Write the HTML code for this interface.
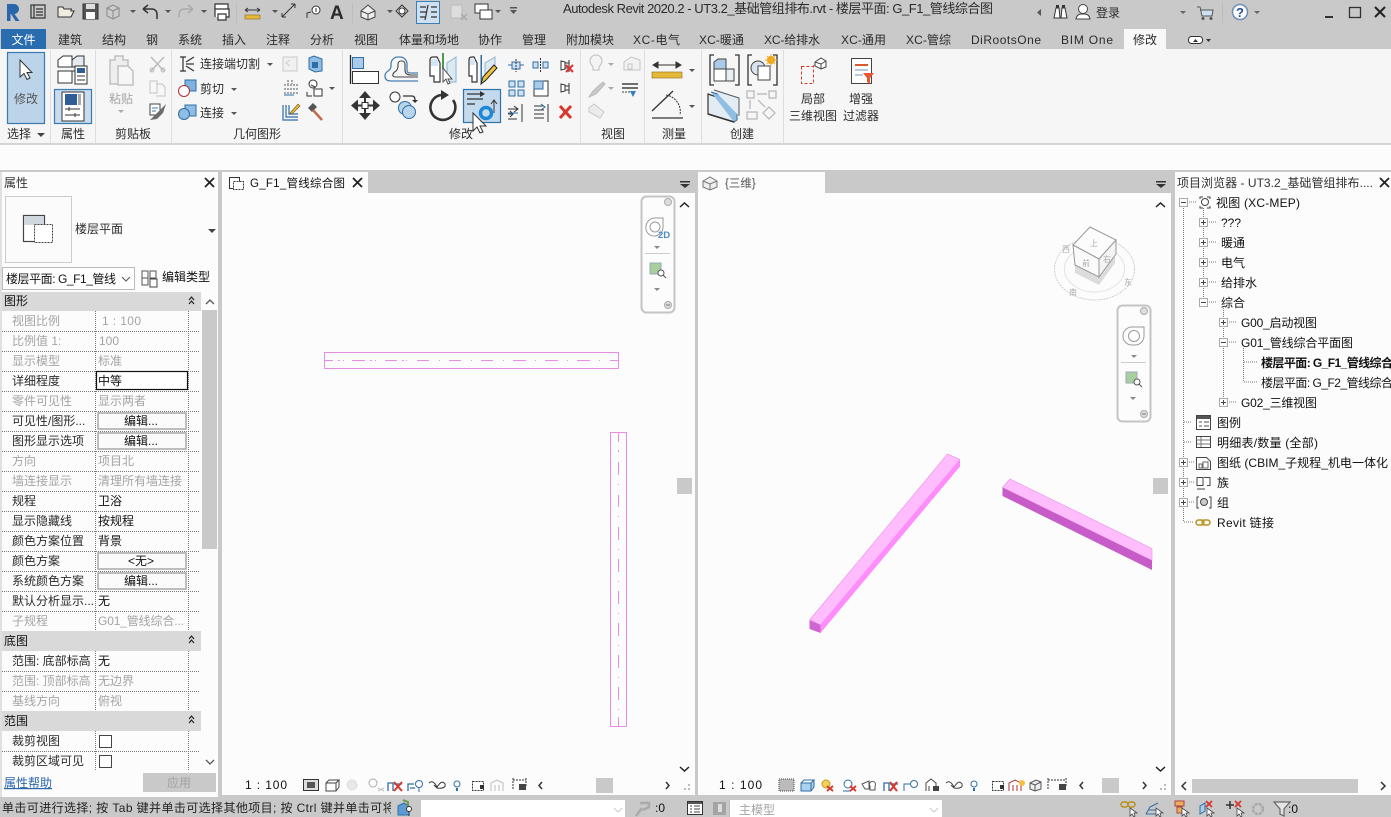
<!DOCTYPE html>
<html><head><meta charset="utf-8"><title>Revit</title>
<style>
html,body{margin:0;padding:0;background:#fcfcfc;width:1391px;height:817px;overflow:hidden}
svg{display:block;position:absolute;left:0;top:0}
text{font-family:"Liberation Sans","Noto Sans CJK SC",sans-serif;font-size:12px;fill:#2b2b2b}
.m{text-anchor:middle}
.g{fill:#8e8e8e}
.k{fill:#111}
.lg{fill:#a4a4a4}
.d{fill:none;stroke:#333;stroke-width:1.2}
.b{fill:#cfe0f0;stroke:#2f6ea5;stroke-width:1.2}
.n{fill:none;stroke:#4a7fb0;stroke-width:1.2}
.w{fill:#fff;stroke:#333;stroke-width:1.2}
.gs{fill:none;stroke:#b5b5b5;stroke-width:1.2}
.do{stroke:#777;stroke-width:1;stroke-dasharray:1 1;fill:none}
.p{fill:none;stroke:#e88ce8;stroke-width:1}
.vc{font-size:8px;fill:#aaa}
</style></head><body>
<svg width="1391" height="817" viewBox="0 0 1391 817" xmlns="http://www.w3.org/2000/svg">
<!-- backgrounds -->
<rect width="1391" height="817" fill="#fcfcfc"/>
<rect width="1391" height="49" fill="#c9c9c9"/>
<rect y="49" width="1391" height="95" fill="#f6f6f6"/>
<rect y="143" width="1391" height="2" fill="#d4d4d4"/>
<rect y="170" width="1391" height="2" fill="#c9c9c9"/>
<rect y="797" width="1391" height="20" fill="#c9c9c9"/>
<!-- QAT -->
<path d="M7 21V4h6.500a4.500 4.500 0 0 1 1 10l5 7h-4l-4.500-7H10.500v7z" fill="#2a66ac"/>
<g>
<rect x="31" y="5" width="14" height="13" class="d"/><path d="M34 5v13M36 9h7M36 12h7M36 15h7" class="d"/>
<path d="M58 17V7h5l1 2h8l-1 0v2h3l-3 6z" fill="#f0ece0" stroke="#333"/>
<rect x="83" y="4" width="15" height="15" fill="#555" stroke="#333"/><rect x="86" y="4" width="9" height="5" fill="#ddd"/><rect x="86" y="12" width="9" height="7" fill="#fff"/>
<path d="M107 8l6-3 6 3v8l-6 3-6-3z" fill="#ccc" stroke="#888"/><path d="M107 8l6 3 6-3M113 11v8" stroke="#888" fill="none"/>
<path d="M143 9h9a5 5 0 0 1 5 5v5M143 9l5-4M143 9l5 4" fill="none" stroke="#333" stroke-width="1.500"/>
<path d="M193 9h-9a5 5 0 0 0-5 5v3M193 9l-5-4M193 9l-5 4" fill="none" stroke="#aaa" stroke-width="1.500"/>
<path d="M215 9V4h13v5M215 17v-8h14v8h-3M218 14h8v6h-8z" fill="#fff" stroke="#333" stroke-width="1.200"/>
<rect x="245" y="15" width="15" height="4" fill="#e7b93a" stroke="#8a6a15" stroke-width=".6"/><path d="M245 10h15M245 10l3-2M245 10l3 2M260 10l-3-2M260 10l-3 2" stroke="#333" fill="none"/>
<path d="M282 17l13-13M282 17v-4M282 17h4M295 4v4M295 4h-4" stroke="#333" fill="none"/>
<circle cx="316" cy="10" r="4" fill="#fff" stroke="#333"/><path d="M316 8v4" stroke="#333"/><path d="M307 18v-5l4-1" fill="none" stroke="#333"/>
<text x="330" y="19" style="font-size:19px;font-weight:bold" fill="#333">A</text>
<path d="M361 11l7-6 7 6v6l-7 3-7-3z" fill="#eee" stroke="#444"/><path d="M361 11l7 3 7-3M368 14v6" stroke="#444" fill="none"/>
<path d="M396 11l6-6 6 6-6 6z" fill="#ddd" stroke="#333"/><circle cx="402" cy="11" r="3" fill="#fff" stroke="#333"/>
<rect x="416.500" y="1.500" width="23" height="22" fill="#cfe0f0" stroke="#3c7fb5"/><path d="M420 7h6M420 12h6M420 17h6M428 5l-3 15M431 7h6M431 12h6M431 17h6" stroke="#333" stroke-width="1.200" fill="none"/>
<rect x="451" y="5" width="11" height="13" fill="#ddd" stroke="#bbb"/><path d="M461 14l6 6M467 14l-6 6" stroke="#aaa" stroke-width="1.500"/>
<rect x="475" y="4" width="13" height="9" fill="#fff" stroke="#333"/><rect x="480" y="10" width="12" height="9" fill="#fff" stroke="#333"/>
</g>
<g fill="#555"><path d="M130 10h6l-3 3zM165 10h6l-3 3zM201 10h6l-3 3zM272 10h6l-3 3zM387 10h6l-3 3zM495 10h6l-3 3z"/><path d="M510 7h7v1.500h-7zM510 10h7l-3.500 4z"/></g>
<rect x="236" y="3" width="1" height="20" fill="#bdbdbd"/><rect x="352" y="3" width="1" height="20" fill="#bdbdbd"/>
<text x="563" y="13" style="font-size:13px" textLength="430" fill="#333">Autodesk Revit 2020.2 - UT3.2_基础管组排布.rvt - 楼层平面: G_F1_管线综合图</text>
<!-- top right -->
<path d="M1041 9v7l-4-3.500z" fill="#555"/>
<path d="M1054 18l2-10h3l1 10zM1061 18l1-10h3l2 10z" fill="#fff" stroke="#333"/><rect x="1056" y="5" width="3" height="3" fill="#333"/><rect x="1062" y="5" width="3" height="3" fill="#333"/>
<circle cx="1083" cy="9" r="4.500" fill="#fff" stroke="#444"/><path d="M1076 19c1-5 4-5 7-5s6 0 7 5z" fill="#fff" stroke="#444"/>
<text x="1096" y="17">登录</text>
<path d="M1180 11h6l-3 3z" fill="#666"/>
<path d="M1197 7h3l2 9h10l1-6h-13" fill="#cfe0f0" stroke="#555"/><circle cx="1203" cy="18.500" r="1.500" fill="#555"/><circle cx="1211" cy="18.500" r="1.500" fill="#555"/>
<rect x="1222" y="3" width="1" height="20" fill="#bbb"/>
<circle cx="1240" cy="12" r="7.500" fill="#fff" stroke="#6d8db5" stroke-width="1.500"/><text x="1240" y="17" class="m" style="font-size:13px;font-weight:bold;fill:#234f9e">?</text>
<path d="M1254 11h6l-3 3z" fill="#666"/>
<rect x="1325" y="16" width="8" height="2" fill="#333"/>
<rect x="1349.500" y="7.500" width="11" height="10" fill="none" stroke="#333" stroke-width="1.300"/>
<path d="M1375 7l10 10M1385 7l-10 10" stroke="#222" stroke-width="2"/>
<!-- tabs -->
<rect x="1" y="29" width="45" height="20" fill="#2a6cb0"/>
<text x="23.500" y="44" class="m" style="fill:#fff">文件</text>
<rect x="1124" y="29" width="42" height="20" fill="#f8f8f8"/>
<g style="fill:#333">
<text x="70" y="44" class="m">建筑</text><text x="114" y="44" class="m">结构</text><text x="152" y="44" class="m">钢</text><text x="190" y="44" class="m">系统</text><text x="234" y="44" class="m">插入</text><text x="278" y="44" class="m">注释</text><text x="322" y="44" class="m">分析</text><text x="366" y="44" class="m">视图</text><text x="429" y="44" class="m">体量和场地</text><text x="490" y="44" class="m">协作</text><text x="534" y="44" class="m">管理</text><text x="590" y="44" class="m">附加模块</text><text x="633" y="44" textLength="47">XC-电气</text><text x="699" y="44" textLength="45">XC-暖通</text><text x="764" y="44" textLength="56">XC-给排水</text><text x="841" y="44" textLength="45">XC-通用</text><text x="906" y="44" textLength="45">XC-管综</text><text x="971" y="44" textLength="70">DiRootsOne</text><text x="1061" y="44" textLength="52">BIM One</text><text x="1145" y="44" class="m">修改</text>
</g>
<rect x="1188.500" y="36.500" width="14" height="7" rx="3" fill="#fff" stroke="#333"/><path d="M1193 42l2.500-3 2.500 3z" fill="#333"/><path d="M1206 39h5l-2.500 3z" fill="#333"/>
<!-- ribbon separators -->
<g fill="#dedede"><rect x="50" y="50" width="1" height="93"/><rect x="95" y="50" width="1" height="93"/><rect x="171" y="50" width="1" height="93"/><rect x="342" y="50" width="1" height="93"/><rect x="580" y="50" width="1" height="93"/><rect x="644" y="50" width="1" height="93"/><rect x="701" y="50" width="1" height="93"/><rect x="783" y="50" width="1" height="93"/></g>
<!-- panel labels -->
<g>
<text x="7" y="138">选择</text><path d="M37 133h8l-4 4z" fill="#444"/>
<text x="73" y="138" class="m">属性</text><text x="133" y="138" class="m">剪贴板</text><text x="257" y="138" class="m">几何图形</text><text x="461" y="138" class="m">修改</text><text x="613" y="138" class="m">视图</text><text x="674" y="138" class="m">测量</text><text x="742" y="138" class="m">创建</text>
</g>
<!-- select -->
<rect x="7.500" y="52.500" width="37" height="71" fill="#bcd4ea" stroke="#3a7ab0" stroke-width="1.200"/>
<path d="M20 60v17l4-3.500 3 6 3-1.500-3-5.500h5z" fill="#fff" stroke="#333"/>
<text x="26" y="103" class="m" style="fill:#555">修改</text>
<!-- properties icons -->
<path d="M58 60l5-4h9v11h-14zM58 71h14v12h-14z" fill="#fff" stroke="#333"/><path d="M72 60l5-4h7v11h-12zM72 71h6" fill="#e4eaef" stroke="#333"/>
<rect x="75" y="66" width="12" height="18" fill="#fff" stroke="#333"/><rect x="77" y="68" width="8" height="5" fill="#2f5e96"/><path d="M77 76h8M77 80h8" stroke="#333"/>
<rect x="54.500" y="89.500" width="37" height="34" fill="#c9dcee" stroke="#3a7ab0" stroke-width="1.200"/>
<rect x="62" y="92" width="22" height="29" fill="#fff" stroke="#333"/><rect x="65" y="94" width="12" height="11" fill="#2f5e96"/><rect x="78" y="94" width="3" height="11" fill="#aaa"/><path d="M65 109h15M65 115h15M69 107v4M75 113v4" stroke="#333"/>
<!-- clipboard -->
<path d="M110 60h5v-4h8v4h5v24h-18z" fill="#eee" stroke="#c0c0c0" stroke-width="1.500"/><path d="M118 66h10l5 5v14h-15z" fill="#f6f6f6" stroke="#c0c0c0" stroke-width="1.500"/>
<text x="121" y="103" class="m lg">粘贴</text><path d="M118 110h6l-3 3z" fill="#aaa"/>
<path d="M151 57l13 14M164 57l-13 14" stroke="#bbb" stroke-width="1.500"/><circle cx="152" cy="70" r="2" fill="none" stroke="#bbb"/><circle cx="163" cy="70" r="2" fill="none" stroke="#bbb"/>
<path d="M150 81h7v12h-7zM156 84h6l3 3v9h-9" fill="#f7f7f7" stroke="#c4c4c4"/>
<rect x="150" y="104" width="10" height="11" fill="#fff" stroke="#444"/><path d="M152 108h6M152 111h4" stroke="#3a7ab0"/><path d="M150 120l7-7 9-9-3 9-6 6z" fill="#6d6d6d"/>
<!-- geometry -->
<path d="M180 57h6M180 71h6M183 57v14M186 62l8-5M186 64h8M186 66l8 5" stroke="#333" fill="none" stroke-width="1.200"/>
<text x="200" y="68">连接端切割</text><path d="M267 63h6l-3 3z" fill="#555"/>
<rect x="185" y="80" width="11" height="11" fill="#7fb2de" stroke="#2f6ea5"/><circle cx="184" cy="91" r="5.500" fill="#fff" stroke="#b03030"/>
<text x="200" y="93">剪切</text><path d="M231 88h6l-3 3z" fill="#555"/>
<rect x="185" y="105" width="11" height="11" fill="#8fbde3" stroke="#2f6ea5"/><circle cx="184" cy="114" r="5.500" fill="#8fbde3" stroke="#2f6ea5"/>
<text x="200" y="117">连接</text><path d="M231 112h6l-3 3z" fill="#555"/>
<path d="M283 57h14v14h-14z" fill="#f1f1f1" stroke="#ccc"/><path d="M290 60l-4 3 4 3" stroke="#ccc" fill="none"/>
<path d="M309 58l5-2 8 3v12l-7 1-6-3z" fill="#8fbde3" stroke="#2f6ea5"/><rect x="312" y="62" width="6" height="6" fill="#2f6ea5"/>
<path d="M284 85h14M284 89h14M284 93h14M288 80v4M292 80v4" stroke="#555" fill="none" stroke-dasharray="2 1"/><path d="M284 95h10" stroke="#2f6ea5"/>
<circle cx="313" cy="84" r="4" fill="#fff" stroke="#333"/><rect x="314" y="89" width="8" height="7" fill="#fff" stroke="#333"/><path d="M307 92v4h5M311 85l4 2" stroke="#333" fill="none"/><path d="M329 87h6l-3 3z" fill="#555"/>
<path d="M283 105v15h15M286 105v12h12M289 105v9h9" fill="none" stroke="#2f6ea5" stroke-width="1.200"/><path d="M290 113l8-9 2 2-8 8z" fill="#e9b93a" stroke="#7a5a10" stroke-width=".6"/>
<path d="M308 108l5-5 4 4-5 5z" fill="#555"/><path d="M313 110l9 10" stroke="#c06a50" stroke-width="2.500"/>
<!-- align -->
<path d="M350.500 55v29" stroke="#222" stroke-width="1.300"/><rect x="352.500" y="57.500" width="11" height="11" fill="#a9cbe8" stroke="#2f6ea5"/><rect x="352.500" y="71.500" width="26" height="12" fill="#fff" stroke="#333"/>
<!-- offset -->
<path d="M418 73h-8q-3 0-3-3v-6a7 7 0 0 0-7-7h-2a7 7 0 0 0-7 7v2q0 3-3 5-3 2-3 5 0 5 6 5h27" fill="none" stroke="#4a7fb0" stroke-width="1.300"/>
<path d="M418 69h-5q-3 0-3-3v-2a10 10 0 0 0-10-10" fill="none" stroke="#fff" stroke-width="0"/>
<path d="M418 77h-22q-4 0-3-3 1-2 3-3 2-2 2-5v-2a3 3 0 0 1 3-3h1a3 3 0 0 1 3 3v6q0 5 6 5h7" fill="none" stroke="#444" stroke-width="1.100"/>
<!-- mirror pick -->
<path d="M430 60q0-3 3-3h4l3 6v19h-6v-6h-4z" fill="#fff" stroke="#333" stroke-width="1.200"/><rect x="431" y="59" width="7" height="7" fill="#d5e5f3"/><rect x="442" y="53" width="2" height="16" fill="#4f9a4a"/><path d="M447 63l9-6v25h-9z" fill="#dbe9f3" stroke="#8fb3cf"/>
<path d="M443 68v14l3-3 2 5 2-1-2-4h4z" fill="#fff" stroke="#555"/>
<!-- mirror draw -->
<path d="M469 60q0-3 3-3h2l3 6v19h-5v-6h-3z" fill="#fff" stroke="#333" stroke-width="1.200"/><rect x="470" y="59" width="5" height="6" fill="#d5e5f3"/><rect x="480.500" y="55" width="1.500" height="28" fill="#2f6ea5"/><path d="M485 63l10-6v12l-10 12z" fill="#dbe9f3" stroke="#8fb3cf"/>
<path d="M481 84l2-7 11-12 3 3-11 12z" fill="#f1c33c" stroke="#222"/>
<!-- move -->
<g fill="#333"><path d="M365 91l-6 7h12zM365 120l-6-7h12zM351 105.500l7-6v12zM380 105.500l-7-6v12z"/><rect x="362" y="102.500" width="6" height="6" fill="#fff" stroke="#333"/><path d="M364 96h2v7h-2zM364 108h2v7h-2zM356 104.500h6v2h-6zM368 104.500h6v2h-6z"/></g>
<!-- copy -->
<circle cx="395" cy="97" r="5" fill="#fff" stroke="#333"/><path d="M403 96h9q3 0 3 4" stroke="#333" fill="none" stroke-width="1.300"/><path d="M412 100h6l-3 3z" fill="#333"/><circle cx="405" cy="108" r="6.500" fill="#b8d5ec" stroke="#2f6ea5"/><circle cx="409" cy="112" r="6.500" fill="#b8d5ec" stroke="#2f6ea5"/>
<!-- rotate -->
<path d="M441 95a12.500 12.500 0 1 0 12 5" fill="none" stroke="#333" stroke-width="2.600"/><path d="M441 90l8 5-8 5z" fill="#333"/>
<!-- trim -->
<rect x="463.500" y="89.500" width="37" height="33" fill="#c3d9ec" stroke="#2e74ad" stroke-width="1.200"/>
<path d="M467 94h16M467 99h16M467 104h8" stroke="#333" fill="none" stroke-width="1.200"/><path d="M480 91l5 3-5 3z" fill="#333"/><path d="M494 113v-12M491 104l3-4 3 4" stroke="#333" fill="none"/>
<circle cx="486" cy="113" r="5.500" fill="none" stroke="#1e88d8" stroke-width="3.500"/>
<path d="M473 113v18l4-4 3 6 3-1-3-6h6z" fill="#fff" stroke="#333"/>
<!-- small modify -->
<g>
<path d="M508 65h5M519 65h5" stroke="#2f6ea5"/><rect x="512" y="62" width="8" height="7" fill="#cfe0f0" stroke="#2f6ea5"/><path d="M516 59v13" stroke="#333" stroke-dasharray="2 1"/>
<rect x="533" y="62" width="5" height="6" fill="#cfe0f0" stroke="#2f6ea5"/><rect x="543" y="62" width="5" height="6" fill="#cfe0f0" stroke="#2f6ea5"/><path d="M540.500 58v14" stroke="#333" stroke-dasharray="2 1"/>
<path d="M561 61l4 1v7l-4 1zM565 63h4M565 68h4M569 60v12" fill="#fff" stroke="#333"/><path d="M566 65l7 7M573 65l-7 7" stroke="#d33" stroke-width="2"/>
<rect x="509" y="81" width="6" height="6" fill="#cfe0f0" stroke="#2f6ea5"/><rect x="518" y="81" width="6" height="6" fill="#cfe0f0" stroke="#2f6ea5"/><rect x="509" y="90" width="6" height="6" fill="#cfe0f0" stroke="#2f6ea5"/><rect x="518" y="90" width="6" height="6" fill="#cfe0f0" stroke="#2f6ea5"/>
<rect x="534" y="81" width="14" height="15" fill="#fff" stroke="#333"/><rect x="534" y="81" width="9" height="8" fill="#a9cbe8" stroke="#2f6ea5"/>
<path d="M561 84l4 1v6l-4 1zM565 86h4M565 90h4M569 83v11" fill="#fff" stroke="#333"/>
<path d="M508 109h9M508 114h5M508 119h9M522 104v18M514 106l4 3-4 3M510 111l3 3-3 3" stroke="#333" fill="none"/><path d="M508 113h10" stroke="#2f6ea5"/>
<path d="M534 106h10M534 110h10M534 114h10M534 118h10M548 104v18" stroke="#333" fill="none"/><path d="M541 104l4 3-4 3" stroke="#2f6ea5" fill="none"/>
<path d="M560 106l11 12M571 106l-11 12" stroke="#d8372c" stroke-width="3"/>
</g>
<!-- view -->
<path d="M590 61a6 6 0 1 1 12 0c0 3-2 4-3 6v3h-6v-3c-1-2-3-3-3-6z" fill="#f4f4f4" stroke="#c8c8c8" stroke-width="1.300"/><path d="M608 63h6l-3 3z" fill="#aaa"/>
<path d="M624 62l7-5 9 3v10h-16z" fill="#f2f2f2" stroke="#c4c4c4"/><path d="M628 64h4v5h-4z" fill="none" stroke="#c4c4c4"/>
<path d="M589 97l4-6 10-9 2 2-9 10z" fill="#c8c8c8" stroke="#bbb"/><path d="M608 87h6l-3 3z" fill="#aaa"/>
<path d="M622 84h16M622 88h16" stroke="#444" stroke-width="1.400"/><path d="M622 92h8" stroke="#444" stroke-dasharray="2 1"/><path d="M630 91h6l-3 6z" fill="#2f7fc8"/>
<path d="M589 108l5-4 10 8-4 6-11-6z" fill="#ececec" stroke="#c8c8c8"/>
<!-- measure -->
<path d="M653 65h28M653 65l5-3v6zM681 65l-5-3v6z" fill="#333" stroke="#333"/><rect x="652" y="72" width="30" height="6" fill="#e7b93a" stroke="#8a6a15" stroke-width=".6"/><path d="M689 69h6l-3 3z" fill="#555"/>
<path d="M652 111l21-20M652 111l0 0" stroke="#333" fill="none" stroke-width="1.300"/><path d="M666 95a17 17 0 0 1 14 20" stroke="#333" fill="none" stroke-dasharray="2 1"/><path d="M652 118h31" stroke="#333" stroke-width="1.300"/><path d="M689 105h6l-3 3z" fill="#555"/>
<!-- create -->
<path d="M714 55h-4v30h4M735 55h4v30h-4" fill="none" stroke="#333" stroke-width="1.300"/><path d="M714 62l4-3h8v10h-12z" fill="#a9cbe8" stroke="#444"/><rect x="714" y="69" width="12" height="12" fill="#fff" stroke="#444"/><path d="M726 69h8v12h-8z" fill="#e9eef3" stroke="#444"/>
<path d="M752 55h-4v30h4M773 55h4v30h-4" fill="none" stroke="#333" stroke-width="1.300"/><circle cx="758" cy="68" r="7" fill="#d7e3ee" stroke="#444"/><rect x="758" y="66" width="12" height="14" fill="#fff" stroke="#444"/><circle cx="771" cy="60" r="4" fill="#f09a1c"/><path d="M771 54v12M765 60h12M767 56l8 8M775 56l-8 8" stroke="#f0b020"/>
<path d="M708 94l26 9v19l-26-8z" fill="#e3ecf3" stroke="#333" stroke-width="1.200"/><path d="M711 92l26 8v20l-3 2" fill="#8fbde3" stroke="#2f6ea5"/><path d="M714 90l25 8v18" fill="#e3ecf3" stroke="#555"/><path d="M708 114l26 8" fill="none" stroke="#333" stroke-width="1.500"/>
<g class="gs"><rect x="747" y="91" width="7" height="7"/><rect x="769" y="91" width="7" height="7"/><rect x="747" y="112" width="10" height="7"/><path d="M757 94h10M750 100v9M758 100l7 7M769 107l6 6-6 6-6-6z"/></g>
<!-- local 3d / filter -->
<rect x="801.500" y="66.500" width="12" height="17" fill="none" stroke="#d03a2a" stroke-dasharray="3 2"/><path d="M813 66l3-2" stroke="#888"/><path d="M815 62l6-4 5 3v6l-5 2-6-3z" fill="#fff" stroke="#444"/><path d="M815 62l6 2 5-3M821 64v5" stroke="#444" fill="none"/>
<text x="813" y="103" class="m">局部</text><text x="813" y="120" class="m">三维视图</text>
<rect x="851.500" y="58.500" width="20" height="25" fill="#fff" stroke="#444"/><path d="M855 65h13" stroke="#d85a2a" stroke-width="2"/><path d="M855 70h13M855 75h8" stroke="#9db8cf" stroke-width="1.500"/><path d="M863 73h11l-4 5v6l-3-2v-4z" fill="#e8552e"/>
<text x="861" y="103" class="m">增强</text><text x="861" y="120" class="m">过滤器</text>
<!-- panel separators -->
<rect x="218" y="172" width="4" height="625" fill="#c9c9c9"/><rect x="695" y="172" width="3" height="625" fill="#c9c9c9"/><rect x="1171" y="172" width="4" height="625" fill="#c9c9c9"/>
<rect y="172" width="2" height="625" fill="#e0e0e0"/>
<!-- view tabs -->
<rect x="222" y="172" width="473" height="21" fill="#c9c9c9"/><rect x="222" y="172" width="146" height="21" fill="#fcfcfc"/>
<rect x="698" y="172" width="473" height="21" fill="#c9c9c9"/><rect x="698" y="172" width="127" height="21" fill="#fcfcfc"/>
<rect x="229.500" y="177.500" width="10" height="11" fill="#fff" stroke="#333"/><rect x="233.500" y="181.500" width="10" height="8" fill="#fff" stroke="#333" stroke-dasharray="2 1"/>
<text x="250" y="187" style="font-size:11.500px" class="k" textLength="95">G_F1_管线综合图</text>
<path d="M353 178l9 9M362 178l-9 9" stroke="#222" stroke-width="1.800"/>
<path d="M703 181l7-4 7 4v6l-7 3-7-3z" fill="#eee" stroke="#777"/><path d="M703 181l7 3 7-3M710 184v6" stroke="#777" fill="none"/>
<text x="725" y="187" style="font-size:11.500px;fill:#555">{三维}</text>
<path d="M680 181h10v1.500h-10zM680 184h10l-5 4z" fill="#333"/>
<path d="M1156 181h10v1.500h-10zM1156 184h10l-5 4z" fill="#333"/>
<!-- view 1 drawing -->
<rect x="324.500" y="352.500" width="294" height="16" class="p"/>
<path d="M325 360.500H333M338 360.500h2M343 360.500h1M352 360.500h13M370 360.500h2M375 360.500h1M385 360.500h12M402 360.500h2M406 360.500h1M417 360.500h12M439 360.500h1M449 360.500h12M471 360.500h1M481 360.500h12M503 360.500h1M513 360.500h13M535 360.500h1M545 360.500h13M567 360.500h1M577 360.500h13M599 360.500h1M610 360.500h9" stroke="#e88ce8" fill="none"/>
<rect x="610.500" y="432.500" width="16" height="294" class="p"/>
<path d="M618.500 433v9M618.500 450v2M618.500 462v13M618.500 484v1M618.500 495v12M618.500 516v1M618.500 527v13M618.500 549v1M618.500 559v13M618.500 581v1M618.500 591v13M618.500 613v1M618.500 623v13M618.500 645v1M618.500 655v13M618.500 677v1M618.500 687v13M618.500 709v1M618.500 717v9" stroke="#e88ce8" fill="none"/>
<!-- view 2 drawing -->
<path d="M810 619.500L947.500 454 960 459.500 820.500 625z" fill="#ffbdfd" stroke="#e88ce8" stroke-width=".6"/>
<path d="M820.500 625L960 459.500V466.500L820.500 633z" fill="#ff8cfb"/>
<path d="M809.500 620l11 5v8l-11-4z" fill="#cf66d0"/>
<path d="M1010 479l-7.500 8.500L1152 560.500V548.500z" fill="#ffbdfd" stroke="#e88ce8" stroke-width=".6"/>
<path d="M1002.500 487.500V496L1152 570v-9.500z" fill="#c75cc8"/>
<!-- scroll blocks -->
<rect x="677" y="478" width="15" height="16" fill="#c9c9c9"/><rect x="1153" y="478" width="15" height="16" fill="#c9c9c9"/>
<path d="M680 207l4.500-4 4.500 4M1156 207l4.500-4 4.500 4" fill="none" stroke="#222" stroke-width="1.500"/>
<path d="M680 767l4.500 4 4.500-4M1156 767l4.500 4 4.500-4" fill="none" stroke="#222" stroke-width="1.500"/>
<!-- nav bars -->
<rect x="641.500" y="196.500" width="33" height="116" rx="5" fill="#fcfcfc" stroke="#c4c4c4" stroke-width="2"/>
<circle cx="668" cy="202" r="3.500" fill="#ddd" stroke="#aaa"/><circle cx="668" cy="305" r="3.500" fill="#ddd" stroke="#aaa"/><path d="M666 305h4" stroke="#777"/>
<path d="M646 227a9 9 0 0 1 9-9h8v9a9 9 0 0 1-9 9 8 8 0 0 1-8-9z" fill="#fff" stroke="#999"/><circle cx="655" cy="227" r="5" fill="none" stroke="#999"/>
<text x="658" y="238" style="font-size:9.500px;font-weight:bold;fill:#4b8bc0">2D</text>
<path d="M654 246h6l-3 3z" fill="#888"/><path d="M645 253.500h25" stroke="#ccc"/>
<rect x="650" y="263" width="11" height="11" fill="#a9cf9f" stroke="#9ab"/><circle cx="661" cy="273" r="3" fill="#fff" stroke="#555"/><path d="M663 275l3 3" stroke="#555"/>
<path d="M654 288h6l-3 3z" fill="#888"/>
<rect x="1117.500" y="305.500" width="33" height="116" rx="5" fill="#fcfcfc" stroke="#c4c4c4" stroke-width="2"/>
<circle cx="1144" cy="311" r="3.500" fill="#ddd" stroke="#aaa"/><circle cx="1144" cy="414" r="3.500" fill="#ddd" stroke="#aaa"/><path d="M1142 414h4" stroke="#777"/>
<path d="M1123 336a9 9 0 0 1 9-9h12v9a9 9 0 0 1-9 9h-3a9 9 0 0 1-9-9z" fill="#fff" stroke="#999"/><circle cx="1134" cy="336" r="5.500" fill="none" stroke="#999"/>
<path d="M1131 355h6l-3 3z" fill="#888"/><path d="M1121 362.500h25" stroke="#ccc"/>
<rect x="1126" y="372" width="11" height="11" fill="#a9cf9f" stroke="#9ab"/><circle cx="1137" cy="382" r="3" fill="#fff" stroke="#555"/><path d="M1139 384l3 3" stroke="#555"/>
<path d="M1130 397h6l-3 3z" fill="#888"/>
<!-- view cube -->
<ellipse cx="1094.500" cy="269" rx="40" ry="31" fill="none" stroke="#cfcfcf" stroke-dasharray="2 1"/><ellipse cx="1094.500" cy="269" rx="30" ry="23" fill="none" stroke="#e2e2e2"/>
<path d="M1075 265l23 12 17-24v10l-16 22-24-12z" fill="#dcdcdc"/>
<path d="M1090 227l26 13-17 19-26-14z" fill="#fcfcfc" stroke="#999"/><path d="M1073 245l26 14v18l-24-12z" fill="#fafafa" stroke="#999"/><path d="M1116 240v14l-17 23v-18z" fill="#f4f4f4" stroke="#999"/>
<text x="1094" y="246" class="m vc">上</text><text x="1086" y="266" class="m vc">前</text><text x="1107" y="262" class="m vc">右</text>
<text x="1066" y="252" class="m vc">西</text><text x="1128" y="285" class="m vc">东</text><text x="1073" y="295" class="m vc">南</text>
<!-- properties panel -->
<text x="4" y="187" style="fill:#333">属性</text>
<path d="M205 178l9 9M214 178l-9 9" stroke="#222" stroke-width="1.800"/>
<rect x="5.500" y="196.500" width="66" height="66" fill="#fbfbfb" stroke="#ccc"/>
<rect x="23.500" y="215.500" width="21" height="26" fill="#fff" stroke="#444" stroke-width="1.200"/><rect x="24" y="216" width="20" height="9" fill="#cfd8df"/><rect x="34.500" y="224.500" width="18" height="18" fill="#fff" stroke="#444" stroke-dasharray="2 1"/>
<text x="75" y="233">楼层平面</text>
<path d="M208 229h8l-4 4z" fill="#444"/>
<rect x="2.500" y="267.500" width="132" height="22" fill="#fff" stroke="#bbb"/>
<text x="6" y="283" class="k" textLength="110">楼层平面: G_F1_管线</text>
<path d="M122 277l4 4 4-4" fill="none" stroke="#555"/>
<rect x="142" y="271" width="6" height="7" fill="none" stroke="#555"/><rect x="150" y="271" width="6" height="7" fill="none" stroke="#555"/><rect x="142" y="278" width="6" height="7" fill="none" stroke="#555"/><rect x="150" y="279" width="7" height="8" fill="#fff" stroke="#444"/>
<text x="162" y="281" class="k" textLength="48">编辑类型</text>
<!-- prop headers -->
<g fill="#d9d9d9"><rect x="2" y="292" width="199" height="19"/><rect x="2" y="631" width="199" height="20"/><rect x="2" y="711" width="199" height="20"/></g>
<text x="4" y="305" class="k">图形</text><text x="4" y="645" class="k">底图</text><text x="4" y="725" class="k">范围</text>
<g fill="none" stroke="#222" stroke-width="1.200"><path d="M189 300l2.500-3 2.500 3M189 304l2.500-3 2.500 3M189 639l2.500-3 2.500 3M189 643l2.500-3 2.500 3M189 719l2.500-3 2.500 3M189 723l2.500-3 2.500 3"/></g>
<!-- prop grid -->
<path class="do" d="M2 331.500H200M2 351.500H200M2 371.500H200M2 391.500H200M2 411.500H200M2 431.500H200M2 451.500H200M2 471.500H200M2 491.500H200M2 511.500H200M2 531.500H200M2 551.500H200M2 571.500H200M2 591.500H200M2 611.500H200M2 671.500H200M2 691.500H200M2 751.500H200"/>
<path class="do" d="M95.500 311V631M188.500 311V631M95.500 651V711M188.500 651V711M95.500 731V771M188.500 731V771"/>
<rect x="96.500" y="371.500" width="91" height="18" fill="#fff" stroke="#111" stroke-width="1.200"/>
<g fill="#fbfbfb" stroke="#a8a8a8" stroke-width="1.500"><rect x="98" y="413" width="88" height="16"/><rect x="98" y="433" width="88" height="16"/><rect x="98" y="553" width="88" height="16"/><rect x="98" y="573" width="88" height="16"/></g>
<g>
<text x="12" y="325" class="lg">视图比例</text><text x="102" y="325" class="lg" textLength="39">1 : 100</text>
<text x="12" y="345" class="lg">比例值 1:</text><text x="99" y="345" class="lg">100</text>
<text x="12" y="365" class="lg">显示模型</text><text x="98" y="365" class="lg">标准</text>
<text x="12" y="385">详细程度</text><text x="98" y="385" class="k">中等</text>
<text x="12" y="405" class="lg">零件可见性</text><text x="98" y="405" class="lg">显示两者</text>
<text x="12" y="425">可见性/图形...</text><text x="141" y="425" class="m k">编辑...</text>
<text x="12" y="445">图形显示选项</text><text x="141" y="445" class="m k">编辑...</text>
<text x="12" y="465" class="lg">方向</text><text x="98" y="465" class="lg">项目北</text>
<text x="12" y="485" class="lg">墙连接显示</text><text x="98" y="485" class="lg">清理所有墙连接</text>
<text x="12" y="505">规程</text><text x="98" y="505" class="k">卫浴</text>
<text x="12" y="525">显示隐藏线</text><text x="98" y="525" class="k">按规程</text>
<text x="12" y="545">颜色方案位置</text><text x="98" y="545" class="k">背景</text>
<text x="12" y="565">颜色方案</text><text x="141" y="565" class="m k">&lt;无&gt;</text>
<text x="12" y="585">系统颜色方案</text><text x="141" y="585" class="m k">编辑...</text>
<text x="12" y="605">默认分析显示...</text><text x="98" y="605" class="k">无</text>
<text x="12" y="625" class="lg">子规程</text><text x="98" y="625" class="lg" textLength="86">G01_管线综合...</text>
<text x="12" y="665">范围: 底部标高</text><text x="98" y="665" class="k">无</text>
<text x="12" y="685" class="lg">范围: 顶部标高</text><text x="98" y="685" class="lg">无边界</text>
<text x="12" y="705" class="lg">基线方向</text><text x="98" y="705" class="lg">俯视</text>
<text x="12" y="745">裁剪视图</text>
<text x="12" y="765">裁剪区域可见</text>
</g>
<rect x="99.500" y="735.500" width="12" height="12" fill="#fff" stroke="#444"/><rect x="99.500" y="755.500" width="12" height="12" fill="#fff" stroke="#444"/>
<!-- prop scrollbar -->
<rect x="202" y="310" width="15" height="239" fill="#c9c9c9"/>
<path d="M206 304l4-4 4 4M206 760l4 4 4-4" fill="none" stroke="#555" stroke-width="1.300"/>
<text x="4" y="787" style="fill:#2a66ac;text-decoration:underline">属性帮助</text>
<rect x="143" y="773" width="73" height="19" fill="#c9c9c9"/><text x="179" y="787" class="m" style="fill:#a2a2a2">应用</text>
<!-- browser -->
<text x="1177" y="187" style="fill:#333" textLength="196">项目浏览器 - UT3.2_基础管组排布....</text>
<path d="M1380 178l9 9M1389 178l-9 9" stroke="#222" stroke-width="1.800"/>
<path class="do" d="M1183.500 208V522M1203.500 208V302M1223.500 308V402M1243.500 348V382M1189 202h7M1209 222h8M1209 242h8M1209 262h8M1209 282h8M1209 302h8M1229 322h8M1229 342h8M1244 362h14M1244 382h14M1229 402h8M1184 422h8M1184 442h8M1189 462h5M1189 482h5M1189 502h5M1184 522h10"/>
<g fill="#fff" stroke="#aaa"><rect x="1179.500" y="198.500" width="8" height="8"/><rect x="1199.500" y="218.500" width="8" height="8"/><rect x="1199.500" y="238.500" width="8" height="8"/><rect x="1199.500" y="258.500" width="8" height="8"/><rect x="1199.500" y="278.500" width="8" height="8"/><rect x="1199.500" y="298.500" width="8" height="8"/><rect x="1219.500" y="318.500" width="8" height="8"/><rect x="1219.500" y="338.500" width="8" height="8"/><rect x="1219.500" y="398.500" width="8" height="8"/><rect x="1179.500" y="458.500" width="8" height="8"/><rect x="1179.500" y="478.500" width="8" height="8"/><rect x="1179.500" y="498.500" width="8" height="8"/></g>
<path d="M1181 202.500h5M1201 222.500h5M1203.500 220v5M1201 242.500h5M1203.500 240v5M1201 262.500h5M1203.500 260v5M1201 282.500h5M1203.500 280v5M1201 302.500h5M1221 322.500h5M1223.500 320v5M1221 342.500h5M1221 402.500h5M1223.500 400v5M1181 462.500h5M1183.500 460v5M1181 482.500h5M1183.500 480v5M1181 502.500h5M1183.500 500v5" stroke="#444"/>
<path d="M1200 199v-2h3M1207 197h3v2M1210 206v2h-3M1203 208h-3v-2" fill="none" stroke="#444"/><circle cx="1205" cy="202" r="3.500" fill="none" stroke="#444"/>
<g>
<text x="1216" y="207" class="k" textLength="84">视图 (XC-MEP)</text>
<text x="1221" y="227" class="k">???</text><text x="1221" y="247" class="k">暖通</text><text x="1221" y="267" class="k">电气</text><text x="1221" y="287" class="k">给排水</text><text x="1221" y="307" class="k">综合</text>
<text x="1241" y="327" class="k" textLength="76">G00_启动视图</text>
<text x="1241" y="347" class="k" textLength="112">G01_管线综合平面图</text>
<text x="1261" y="367" class="k" style="font-weight:bold" textLength="132">楼层平面: G_F1_管线综合</text>
<text x="1261" y="387" class="k" textLength="132">楼层平面: G_F2_管线综合</text>
<text x="1241" y="407" class="k" textLength="76">G02_三维视图</text>
<text x="1217" y="427" class="k">图例</text>
<text x="1217" y="447" class="k" textLength="101">明细表/数量 (全部)</text>
<text x="1217" y="467" class="k" textLength="171">图纸 (CBIM_子规程_机电一体化</text>
<text x="1217" y="487" class="k">族</text><text x="1217" y="507" class="k">组</text>
<text x="1217" y="527" class="k" textLength="57">Revit 链接</text>
</g>
<rect x="1196.500" y="415.500" width="14" height="14" fill="#fff" stroke="#444"/><rect x="1197" y="416" width="13" height="3" fill="#555"/><path d="M1199 422h3M1204 422h5M1199 426h3M1204 426h5" stroke="#555"/>
<rect x="1196.500" y="436.500" width="14" height="11" fill="#fff" stroke="#444"/><path d="M1197 440h13M1197 444h13M1201 437v10" stroke="#777"/>
<path d="M1196.500 457.500h10l4 4v8h-14z" fill="#fff" stroke="#444"/><path d="M1199 464h3v4h-3zM1203 462h5v6h-5z" fill="none" stroke="#666"/>
<path d="M1197 477.500h6v8h-6zM1204 477.500h6v8h-3M1197 489h8" fill="#fff" stroke="#444"/>
<path d="M1199 497h-2v11h2M1209 497h2v11h-2" fill="none" stroke="#444"/><circle cx="1204" cy="502" r="3.500" fill="#ccc" stroke="#444"/>
<rect x="1196" y="520" width="8" height="5" rx="2.500" fill="none" stroke="#b8901a" stroke-width="1.500"/><rect x="1202" y="520" width="8" height="5" rx="2.500" fill="none" stroke="#b8901a" stroke-width="1.500"/>
<rect x="1192" y="779" width="166" height="14" fill="#c9c9c9"/>
<path d="M1186 782l-4 4 4 4M1381 782l4 4-4 4" fill="none" stroke="#333" stroke-width="1.500"/>
<!-- view control bars -->
<rect x="222" y="795" width="1169" height="2" fill="#c9c9c9"/>
<text x="245" y="789" class="k" textLength="42">1 : 100</text>
<text x="719" y="789" class="k" textLength="43">1 : 100</text>
<g>
<rect x="303.500" y="779.500" width="15" height="11" fill="#ddd" stroke="#333"/><rect x="307" y="782" width="8" height="6" fill="#555"/>
<path d="M326 783h10l3-3v7l-3 4h-10zM326 783l3-3h10M336 783v8" fill="#fff" stroke="#444"/>
<circle cx="352" cy="785" r="5" fill="#e8e8e8" stroke="#ccc" stroke-dasharray="1 1"/>
<circle cx="373" cy="783" r="4" fill="#fff" stroke="#aaa"/><path d="M378 788l6 3M384 788l-6 3" stroke="#bbb"/>
<path d="M388 791v-8h5v8M394 784h8" stroke="#2f6ea5" fill="none" stroke-width="1.300"/><path d="M394 782l8 9M402 782l-8 9" stroke="#d8372c" stroke-width="2"/>
<path d="M408 791v-7h6M410 788h5" stroke="#2f6ea5" fill="none" stroke-width="1.300"/><circle cx="419" cy="784" r="3.500" fill="#fff" stroke="#2f6ea5"/><path d="M419 788v4" stroke="#2f6ea5"/>
<path d="M429 783c3-3 6 0 8 4 3-4 5-7 8-3 1 3-2 5-8 4l-3-3" fill="none" stroke="#333"/>
<circle cx="457" cy="784" r="3" fill="#fff" stroke="#2f6ea5"/><path d="M456 788h2v3h-2z" fill="#2f6ea5"/>
<rect x="472.500" y="781.500" width="11" height="9" fill="#fff" stroke="#333" stroke-dasharray="2 1"/><rect x="480" y="785" width="4" height="4" fill="#333"/>
<path d="M491 791v-8l6-3 6 3v8M495 791v-6M499 791v-6" fill="none" stroke="#bbb"/>
<path d="M513 778v12M526 778v8M513 780h13" fill="none" stroke="#333" stroke-dasharray="2 1"/><rect x="519" y="784" width="7" height="6" fill="#444"/>
</g>
<path d="M542 782l-3 3.500 3 3.500M666 782l3 3.500-3 3.500" fill="none" stroke="#333" stroke-width="1.500"/>
<rect x="596" y="778" width="17" height="15" fill="#c9c9c9"/>
<g>
<rect x="779" y="779" width="15" height="12" fill="#bbb" stroke="#444" stroke-dasharray="1 1"/>
<path d="M801 783h10l3-3v7l-3 4h-10z" fill="#aad2ef" stroke="#2f6ea5"/><path d="M801 783l3-3h10M811 783v8" stroke="#2f6ea5" fill="none"/>
<circle cx="826" cy="784" r="4" fill="#f4d060" stroke="#c79a10"/><path d="M827 786l6 5M833 786l-6 5" stroke="#d8372c" stroke-width="1.800"/>
<circle cx="848" cy="784" r="4" fill="#fff" stroke="#2f6ea5"/><path d="M843 791h8" stroke="#2f6ea5"/><path d="M850 786l6 5M856 786l-6 5" stroke="#d8372c" stroke-width="1.800"/>
<path d="M862 784l7-3v8h-4zM870 786a3 3 0 1 1 5 0v4h-5z" fill="#fff" stroke="#555"/>
<path d="M884 791v-8h5v8M890 784h8" stroke="#2f6ea5" fill="none" stroke-width="1.300"/><path d="M890 782l7 9M897 782l-7 9" stroke="#d8372c" stroke-width="2"/>
<path d="M904 791v-7h6" stroke="#2f6ea5" fill="none"/><circle cx="914" cy="784" r="3.500" fill="#fff" stroke="#2f6ea5"/>
<path d="M926 791v-8l5-4 5 4v3M929 791v-5" fill="#fff" stroke="#444"/><rect x="933" y="786" width="6" height="5" fill="#444"/>
<path d="M946 783c3-3 6 0 8 4 3-4 5-7 8-3 1 3-2 5-8 4l-3-3" fill="none" stroke="#444"/>
<circle cx="974" cy="784" r="3" fill="#fff" stroke="#2f6ea5"/><path d="M973 788h2v3h-2z" fill="#2f6ea5"/>
<rect x="992.500" y="781.500" width="11" height="9" fill="#fff" stroke="#333" stroke-dasharray="2 1"/><rect x="1000" y="785" width="4" height="4" fill="#333"/>
<path d="M1009 791v-8l6-3 6 3v8M1013 791v-6M1017 791v-6" fill="none" stroke="#a33"/><circle cx="1022" cy="783" r="3" fill="#f4c040"/>
<path d="M1030 783l6-3 5 2v7l-6 2-5-2z" fill="#eee" stroke="#555"/><path d="M1035 785v6M1030 783l5 2 6-3" stroke="#555" fill="none"/>
<path d="M1048 778v12M1066 778v8M1048 780h18" fill="none" stroke="#333" stroke-dasharray="2 1"/><rect x="1059" y="784" width="7" height="6" fill="#444"/>
</g>
<path d="M1083 782l-3 3.500 3 3.500M1143 782l3 3.500-3 3.500" fill="none" stroke="#333" stroke-width="1.500"/>
<rect x="1102" y="778" width="17" height="15" fill="#c9c9c9"/>
<g fill="#bbb"><rect x="688" y="788" width="2" height="2"/><rect x="684" y="788" width="2" height="2"/><rect x="688" y="784" width="2" height="2"/><rect x="1164" y="788" width="2" height="2"/><rect x="1160" y="788" width="2" height="2"/><rect x="1164" y="784" width="2" height="2"/></g>
<!-- status bar -->
<svg x="0" y="797" width="391" height="20"><text x="2" y="15" style="fill:#222" textLength="405">单击可进行选择; 按 Tab 键并单击可选择其他项目; 按 Ctrl 键并单击可将新</text></svg>
<path d="M398 806l6-3 5 3v9h-11z" fill="#5d9bd5" stroke="#2f6ea5"/><path d="M403 800l5 2v5" stroke="#6a9a4a" fill="none" stroke-width="2"/><circle cx="409" cy="809" r="2.500" fill="#fff" stroke="#333"/><path d="M409 811v5" stroke="#333"/>
<rect x="421" y="800" width="204" height="17" fill="#fff"/><path d="M614 808l4 4 4-4" fill="none" stroke="#ccc"/>
<path d="M636 816l6-8M640 803h9v4l-6 3" fill="none" stroke="#aaa" stroke-width="2.500"/>
<text x="655" y="812" class="k">:0</text>
<rect x="687.500" y="801.500" width="15" height="13" fill="#fff" stroke="#333"/><path d="M690 806h2M694 806h6M690 809h2M694 809h6M690 812h2M694 812h6" stroke="#444"/><rect x="688" y="802" width="14" height="2" fill="#555"/>
<rect x="713" y="802" width="13" height="13" fill="#a4a4a4"/><rect x="718" y="804" width="4" height="8" fill="#ddd"/>
<rect x="729" y="800" width="1" height="17" fill="#bbb"/>
<rect x="730" y="800" width="212" height="17" fill="#fff"/><text x="739" y="814" class="lg">主模型</text><path d="M930 808l4 4 4-4" fill="none" stroke="#ccc"/>
<g>
<rect x="1121" y="802" width="7" height="5" rx="2.500" fill="none" stroke="#b8901a" stroke-width="1.500"/><rect x="1128" y="802" width="7" height="5" rx="2.500" fill="none" stroke="#b8901a" stroke-width="1.500"/>
<path d="M1130 808v8l2-2 2 3 1-1-1-3h3z" fill="#fff" stroke="#444" stroke-width=".8"/>
<path d="M1146 814l4-7 8-4M1148 810h10M1146 814h12" stroke="#2f6ea5" fill="none"/><path d="M1156 808v8l2-2 2 3 1-1-1-3h3z" fill="#fff" stroke="#444" stroke-width=".8"/>
<rect x="1175" y="801" width="9" height="5" fill="#e8b05a" stroke="#a44"/><rect x="1177" y="807" width="5" height="6" fill="#e8b05a" stroke="#a44"/><path d="M1182 808v8l2-2 2 3 1-1-1-3h3z" fill="#fff" stroke="#444" stroke-width=".8"/>
<path d="M1200 814v-8l5-3v8z" fill="#a9cbe8" stroke="#2f6ea5"/><path d="M1206 801l6 6M1212 801l-6 6" stroke="#d8372c" stroke-width="1.800"/><path d="M1207 808v8l2-2 2 3 1-1-1-3h3z" fill="#fff" stroke="#444" stroke-width=".8"/>
<path d="M1230 801v8M1226 805h8" stroke="#333" stroke-width="1.500"/><path d="M1235 801l6 6M1241 801l-6 6" stroke="#d8372c" stroke-width="1.800"/><path d="M1237 808v8l2-2 2 3 1-1-1-3h3z" fill="#fff" stroke="#444" stroke-width=".8"/>
<circle cx="1258" cy="809" r="5" fill="none" stroke="#a8a8a8" stroke-width="2.500" stroke-dasharray="3 1"/>
<path d="M1274 802h16l-6 7v7l-4-2v-5z" fill="#e4e4e4" stroke="#666" stroke-width="1.200"/>
</g>
<text x="1288" y="813" class="k">:0</text>
</svg>
</body></html>
